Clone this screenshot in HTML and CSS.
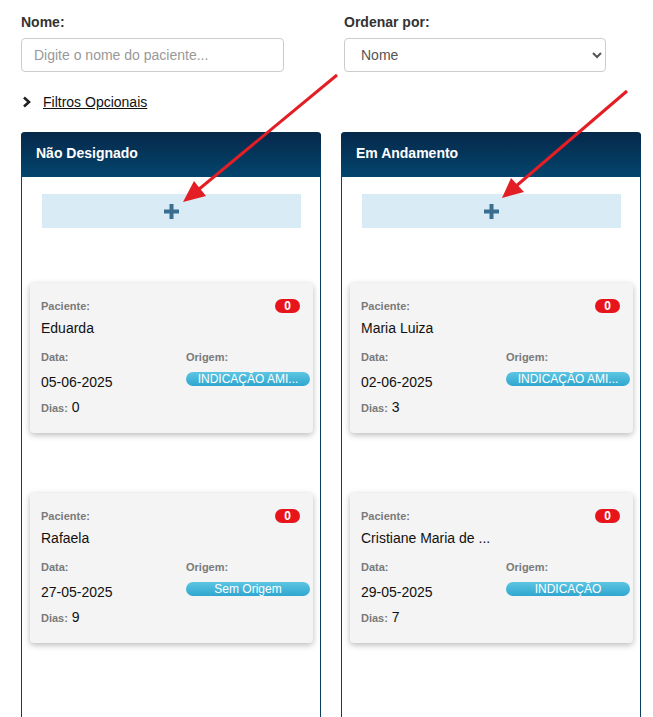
FILE: index.html
```html
<!DOCTYPE html>
<html lang="pt-BR">
  <head>
    <meta charset="UTF-8" />
    <meta name="viewport" content="width=device-width, initial-scale=1.0" />
    <title>Pacientes</title>
    <link rel="stylesheet" href="styles.css">
  </head>
  <body>
    <div class="page">
      <div class="filters">
        <div class="field field-name">
          <label class="field-label" for="nome">Nome:</label>
          <input id="nome" class="input" type="text" placeholder="Digite o nome do paciente..." />
        </div>
        <div class="field field-order">
          <label class="field-label" for="ordem">Ordenar por:</label>
          <select id="ordem" class="input select">
            <option>Nome</option>
          </select>
        </div>
      </div>

      <div class="optional">
        <svg class="chevron" width="10" height="12" viewBox="0 0 10 12">
          <path d="M2 1.5 L7 6 L2 10.5" fill="none" stroke="#222" stroke-width="2.6" />
        </svg>
        <a class="optional-link" href="#">Filtros Opcionais</a>
      </div>

      <div class="board">
        <div class="column">
          <div class="column-header">Não Designado</div>
          <div class="column-body">
            <button class="add-btn" type="button">
              <svg width="17" height="17" viewBox="0 0 17 17">
                <path d="M8.5 1 V16 M1 8.5 H16" stroke="#3a6f8f" stroke-width="4" />
              </svg>
            </button>

            <div class="card">
              <div class="card-top">
                <span class="card-label">Paciente:</span>
                <span class="badge">0</span>
              </div>
              <div class="card-name">Eduarda</div>
              <div class="card-grid">
                <div>
                  <div class="card-label">Data:</div>
                  <div class="card-value">05-06-2025</div>
                </div>
                <div class="card-origin">
                  <div class="card-label">Origem:</div>
                  <div class="pill" title="INDICAÇÃO AMIGO PACIENTE">INDICAÇÃO AMI...</div>
                </div>
              </div>
              <div class="card-days"><span class="card-label">Dias:</span> 0</div>
            </div>

            <div class="card">
              <div class="card-top">
                <span class="card-label">Paciente:</span>
                <span class="badge">0</span>
              </div>
              <div class="card-name">Rafaela</div>
              <div class="card-grid">
                <div>
                  <div class="card-label">Data:</div>
                  <div class="card-value">27-05-2025</div>
                </div>
                <div class="card-origin">
                  <div class="card-label">Origem:</div>
                  <div class="pill">Sem Origem</div>
                </div>
              </div>
              <div class="card-days"><span class="card-label">Dias:</span> 9</div>
            </div>
          </div>
        </div>

        <div class="column">
          <div class="column-header">Em Andamento</div>
          <div class="column-body">
            <button class="add-btn" type="button">
              <svg width="17" height="17" viewBox="0 0 17 17">
                <path d="M8.5 1 V16 M1 8.5 H16" stroke="#3a6f8f" stroke-width="4" />
              </svg>
            </button>

            <div class="card">
              <div class="card-top">
                <span class="card-label">Paciente:</span>
                <span class="badge">0</span>
              </div>
              <div class="card-name">Maria Luiza</div>
              <div class="card-grid">
                <div>
                  <div class="card-label">Data:</div>
                  <div class="card-value">02-06-2025</div>
                </div>
                <div class="card-origin">
                  <div class="card-label">Origem:</div>
                  <div class="pill" title="INDICAÇÃO AMIGO PACIENTE">INDICAÇÃO AMI...</div>
                </div>
              </div>
              <div class="card-days"><span class="card-label">Dias:</span> 3</div>
            </div>

            <div class="card">
              <div class="card-top">
                <span class="card-label">Paciente:</span>
                <span class="badge">0</span>
              </div>
              <div class="card-name">Cristiane Maria de ...</div>
              <div class="card-grid">
                <div>
                  <div class="card-label">Data:</div>
                  <div class="card-value">29-05-2025</div>
                </div>
                <div class="card-origin">
                  <div class="card-label">Origem:</div>
                  <div class="pill">INDICAÇÃO</div>
                </div>
              </div>
              <div class="card-days"><span class="card-label">Dias:</span> 7</div>
            </div>
          </div>
        </div>
      </div>
    </div>

    <!-- setas de anotação -->
    <svg class="arrows" width="653" height="717" viewBox="0 0 653 717">
      <g stroke="#e31e24" stroke-width="3" fill="#e31e24">
        <line x1="337" y1="75" x2="198" y2="190" />
        <line x1="627" y1="91" x2="515" y2="187" />
      </g>
      <g fill="#e31e24">
        <polygon points="183,202 194,181 206,196" />
        <polygon points="502,198 511,178 524,192" />
      </g>
    </svg>
  </body>
</html>
```

FILE: styles.css
```css
body {
  margin: 0;
  font-family: "Liberation Sans", Arial, sans-serif;
  font-size: 14px;
  color: #333;
  background: #fff;
  overflow: hidden;
}

.page {
  padding: 12px 0 0 21px;
  width: 620px;
}

/* filtros */
.filters {
  display: flex;
  gap: 60px;
}

.field {
  display: flex;
  flex-direction: column;
}

.field-name {
  width: 263px;
}

.field-order {
  width: 262px;
}

.field-label {
  font-weight: bold;
  font-size: 14px;
  line-height: 20px;
  color: #333;
  margin-bottom: 6px;
}

.input {
  box-sizing: border-box;
  height: 34px;
  padding: 6px 12px;
  border: 1px solid #ccc;
  border-radius: 4px;
  font-family: inherit;
  font-size: 14px;
  color: #555;
  background: #fff;
}

.input::placeholder {
  color: #999;
}

.select {
  padding-left: 12px;
}

.optional {
  display: flex;
  align-items: center;
  gap: 11px;
  margin-top: 20px;
  height: 20px;
}

.chevron {
  display: block;
  margin-left: 1px;
}

.optional-link {
  color: #111;
  text-decoration: underline;
  font-size: 14px;
}

/* quadro */
.board {
  display: flex;
  gap: 20px;
  margin-top: 20px;
}

.column {
  width: 300px;
  box-sizing: border-box;
  border: 1px solid #0b3f62;
  border-top: none;
  border-radius: 4px 4px 0 0;
  height: 600px;
}

.column-header {
  height: 45px;
  box-sizing: border-box;
  padding: 13px 0 0 15px;
  margin: 0 -1px;
  border-radius: 4px 4px 0 0;
  background: linear-gradient(to bottom, #06284a, #03456d);
  color: #fff;
  font-weight: bold;
  font-size: 14px;
  line-height: 17px;
}

.column-body {
  padding: 17px 7px 0 8px;
}

.add-btn {
  display: flex;
  align-items: center;
  justify-content: center;
  width: calc(100% - 24px);
  height: 34px;
  margin: 0 12px;
  border: none;
  background: #d9ecf6;
  cursor: pointer;
  padding: 0;
}

.card {
  margin-top: 55px;
  height: 150px;
  box-sizing: border-box;
  padding: 15px 3px 0 11px;
  background: #f4f4f4;
  border-radius: 4px;
  box-shadow: 0 2px 6px rgba(0, 0, 0, 0.28);
}

.card + .card {
  margin-top: 60px;
}

.card-label {
  font-size: 11px;
  font-weight: bold;
  color: #7a7a7a;
  line-height: 16px;
}

.card-top {
  display: flex;
  justify-content: space-between;
  align-items: center;
}

.badge {
  width: 25px;
  height: 14px;
  border-radius: 7px;
  background: #e8141c;
  color: #fff;
  font-size: 12px;
  font-weight: bold;
  line-height: 14px;
  text-align: center;
  margin-right: 10px;
}

.card-name {
  margin-top: 4px;
  font-size: 14px;
  line-height: 20px;
  color: #111;
}

.card-grid {
  display: grid;
  grid-template-columns: 145px minmax(0, 1fr);
  margin-top: 11px;
}

.card-origin {
  min-width: 0;
}

.card-value {
  margin-top: 7px;
  font-size: 14px;
  line-height: 20px;
  color: #111;
}

.pill {
  margin-top: 7px;
  height: 14px;
  line-height: 14px;
  border-radius: 7px;
  background: linear-gradient(to bottom, #5ec5e2, #2fa6cf);
  color: #fff;
  font-size: 12px;
  text-align: center;
  padding: 0 6px;
  white-space: nowrap;
  overflow: hidden;
  text-overflow: ellipsis;
}

.card-days {
  margin-top: 5px;
  font-size: 14px;
  line-height: 20px;
  color: #111;
}

.arrows {
  position: absolute;
  top: 0;
  left: 0;
  pointer-events: none;
}
```
